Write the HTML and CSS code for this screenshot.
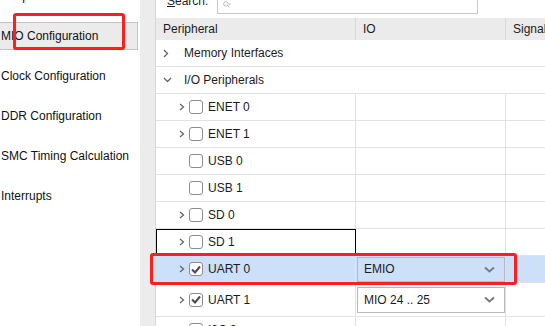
FILE: index.html
```html
<!DOCTYPE html>
<html lang="en">
  <head>
    <meta charset="UTF-8" />
    <meta name="viewport" content="width=device-width, initial-scale=1.0" />
    <title>MIO Configuration</title>
    <link rel="stylesheet" href="styles.css">
  </head>
  <body>
    <div class="app">
      <nav class="pages">
        <div class="page">Peripheral I/O Pins</div>
        <div class="page active">MIO Configuration</div>
        <div class="page">Clock Configuration</div>
        <div class="page">DDR Configuration</div>
        <div class="page">SMC Timing Calculation</div>
        <div class="page">Interrupts</div>
      </nav>

      <div class="splitter"></div>

      <section class="mio">
        <div class="search">
          <label><u>S</u>earch:</label>
          <div class="search-box">
            <svg class="lens" width="14" height="8" viewBox="0 -6 14 14">
              <circle cx="5" cy="-1" r="4" fill="none" stroke="#a0a0a0" stroke-width="1.2" />
              <path d="M8 2l3 3" stroke="#a0a0a0" stroke-width="1.4" />
              <path d="M10 -1h4l-2 2z" fill="#a0a0a0" />
            </svg>
          </div>
        </div>

        <div class="grid">
          <div class="row head">
            <div class="cell">Peripheral</div>
            <div class="cell">IO</div>
            <div class="cell">Signal</div>
          </div>

          <div class="row group">
            <div class="cell tree">
              <span class="twisty"><svg width="6" height="9" viewBox="0 0 6 9"><path d="M1 1l3.5 3.5L1 8" /></svg></span>
              Memory Interfaces
            </div>
          </div>
          <div class="row group">
            <div class="cell tree">
              <span class="twisty"><svg width="9" height="6" viewBox="0 0 9 6"><path d="M1 1l3.5 3.5L8 1" /></svg></span>
              I/O Peripherals
            </div>
          </div>

          <div class="row">
            <div class="cell tree sub">
              <span class="twisty"><svg width="6" height="8" viewBox="0 0 6 8"><path d="M1 1l3.5 3L1 7" /></svg></span>
              <span class="check"></span>ENET 0
            </div>
            <div class="cell"></div>
            <div class="cell"></div>
          </div>
          <div class="row">
            <div class="cell tree sub">
              <span class="twisty"><svg width="6" height="8" viewBox="0 0 6 8"><path d="M1 1l3.5 3L1 7" /></svg></span>
              <span class="check"></span>ENET 1
            </div>
            <div class="cell"></div>
            <div class="cell"></div>
          </div>
          <div class="row">
            <div class="cell tree sub">
              <span class="twisty"></span>
              <span class="check"></span>USB 0
            </div>
            <div class="cell"></div>
            <div class="cell"></div>
          </div>
          <div class="row">
            <div class="cell tree sub">
              <span class="twisty"></span>
              <span class="check"></span>USB 1
            </div>
            <div class="cell"></div>
            <div class="cell"></div>
          </div>
          <div class="row">
            <div class="cell tree sub">
              <span class="twisty"><svg width="6" height="8" viewBox="0 0 6 8"><path d="M1 1l3.5 3L1 7" /></svg></span>
              <span class="check"></span>SD 0
            </div>
            <div class="cell"></div>
            <div class="cell"></div>
          </div>
          <div class="row">
            <div class="cell tree sub focus">
              <span class="twisty"><svg width="6" height="8" viewBox="0 0 6 8"><path d="M1 1l3.5 3L1 7" /></svg></span>
              <span class="check"></span>SD 1
            </div>
            <div class="cell"></div>
            <div class="cell"></div>
          </div>
          <div class="row sel">
            <div class="cell tree sub">
              <span class="twisty"><svg width="6" height="8" viewBox="0 0 6 8"><path d="M1 1l3.5 3L1 7" /></svg></span>
              <span class="check on"><svg width="10" height="9" viewBox="0 0 10 9"><path d="M1 4.5l3 3L9 1.5" /></svg></span>UART 0
            </div>
            <div class="cell">
              <div class="combo">EMIO<svg width="11" height="7" viewBox="0 0 11 7"><path d="M1 1.5l4.5 4 4.5-4" /></svg></div>
            </div>
            <div class="cell"></div>
          </div>
          <div class="row tall">
            <div class="cell tree sub">
              <span class="twisty"><svg width="6" height="8" viewBox="0 0 6 8"><path d="M1 1l3.5 3L1 7" /></svg></span>
              <span class="check on"><svg width="10" height="9" viewBox="0 0 10 9"><path d="M1 4.5l3 3L9 1.5" /></svg></span>UART 1
            </div>
            <div class="cell">
              <div class="combo white">MIO 24 .. 25<svg width="11" height="7" viewBox="0 0 11 7"><path d="M1 1.5l4.5 4 4.5-4" /></svg></div>
            </div>
            <div class="cell"></div>
          </div>
          <div class="row">
            <div class="cell tree sub">
              <span class="twisty"><svg width="6" height="8" viewBox="0 0 6 8"><path d="M1 1l3.5 3L1 7" /></svg></span>
              <span class="check"></span>I2C 0
            </div>
            <div class="cell"></div>
            <div class="cell"></div>
          </div>
        </div>
      </section>

      <!-- red annotation boxes -->
      <div class="mark mark-nav"></div>
      <div class="mark mark-uart"></div>
    </div>
  </body>
</html>
```

FILE: styles.css
```css
body {
  margin: 0;
  font: 12px "Liberation Sans", Arial, sans-serif;
  color: #1c1c1c;
  background: #fff;
  overflow: hidden;
}
.app {
  position: relative;
  display: flex;
  width: 545px;
  height: 326px;
  overflow: hidden;
}

/* left page list */
.pages {
  width: 140px;
  flex: none;
  display: flex;
  flex-direction: column;
  gap: 12px;
  overflow: hidden;
}
.page {
  height: 28px;
  flex: none;
  display: flex;
  align-items: center;
  box-sizing: border-box;
  margin: 0 2px 0 -3px;
  padding-left: 3px;
  border: 1px solid transparent;
  white-space: nowrap;
  color: #111;
}
.page:first-child {
  margin-top: -18px;
}
.page.active {
  background: #ebebeb;
  border-color: #c2c2c2;
}
.splitter {
  width: 15px;
  flex: none;
  background: #ececec;
}

/* right side: search + tree table */
.mio {
  flex: 1;
  min-width: 0;
  border-left: 1px solid #d6d6d6;
  overflow: hidden;
}
.search {
  height: 18px;
  display: flex;
  align-items: flex-start;
  gap: 9px;
  padding-left: 11px;
}
.search label {
  margin-top: -6px;
  line-height: 14px;
}
.search-box {
  margin-top: -12px;
  width: 261px;
  height: 26px;
  box-sizing: border-box;
  border: 1px solid #c8c8c8;
  background: #fff;
  display: flex;
  align-items: flex-end;
  padding: 0 0 4px 2px;
}
.lens {
  display: block;
}

.row {
  display: grid;
  grid-template-columns: 200px 150px 1fr;
  height: 27px;
  box-sizing: border-box;
  border-bottom: 1px solid #e2e2e2;
}
.cell {
  display: flex;
  align-items: center;
  min-width: 0;
  overflow: hidden;
  white-space: nowrap;
  border-right: 1px solid #e2e2e2;
}
.cell:last-child {
  border-right: none;
}
.head {
  height: 22px;
  background: #ebebeb;
  border-bottom: none;
}
.head .cell {
  padding-left: 7px;
  border-right-color: #d8d8d8;
}
.group .cell {
  grid-column: 1 / -1;
  border-right: none;
}
.sel {
  background: #cde0f9;
}
.tall {
  height: 34px;
}

.tree {
  padding-left: 7px;
}
.tree.sub {
  padding-left: 23px;
}
.twisty {
  width: 21px;
  flex: none;
  display: flex;
  align-items: center;
}
.sub .twisty {
  width: 10px;
}
.twisty svg path {
  fill: none;
  stroke: #666;
  stroke-width: 1.3;
}
.check {
  width: 14px;
  height: 14px;
  flex: none;
  box-sizing: border-box;
  margin-right: 5px;
  border: 1px solid #8c8c8c;
  border-radius: 3px;
  background: #fff;
  display: flex;
  align-items: center;
  justify-content: center;
}
.check svg path {
  fill: none;
  stroke: #4a4a4a;
  stroke-width: 2;
}
.focus {
  outline: 1px solid #000;
  outline-offset: -1px;
}

.combo {
  width: 148px;
  height: 25px;
  margin-left: 1px;
  box-sizing: border-box;
  border: 1px solid #b9b9b9;
  padding: 0 9px 0 6px;
  display: flex;
  align-items: center;
  justify-content: space-between;
}
.combo.white {
  height: 26px;
  background: #fff;
}
.combo svg path {
  fill: none;
  stroke: #7a7a7a;
  stroke-width: 2;
}

/* annotation overlays */
.mark {
  position: absolute;
  box-sizing: border-box;
  border: 3px solid #ff1e1e;
  border-radius: 3px;
  pointer-events: none;
}
.mark-nav {
  left: 13px;
  top: 13px;
  width: 112px;
  height: 37px;
}
.mark-uart {
  left: 150px;
  top: 253px;
  width: 367px;
  height: 32px;
}
```
